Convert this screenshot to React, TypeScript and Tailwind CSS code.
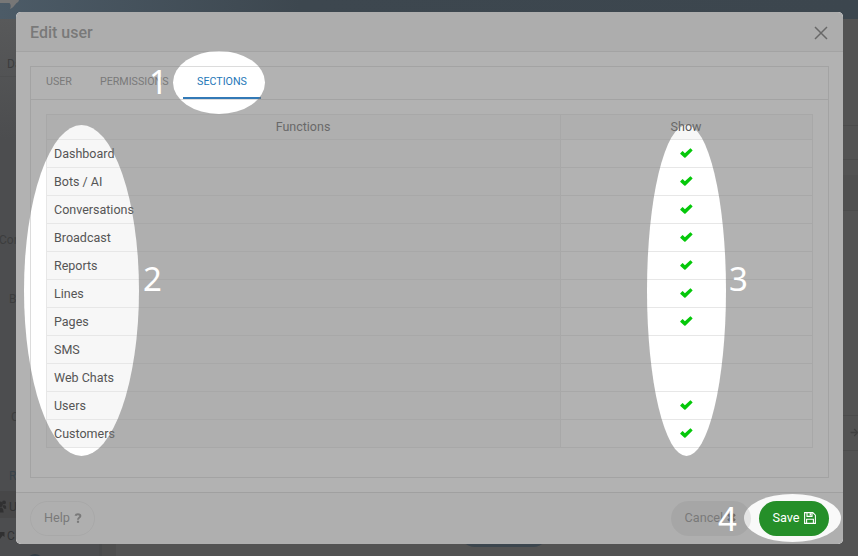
import { FaArrowRight } from "react-icons/fa";
import type { ReactNode } from "react";

const rows: [string, boolean][] = [
  ["Dashboard", true],
  ["Bots / AI", true],
  ["Conversations", true],
  ["Broadcast", true],
  ["Reports", true],
  ["Lines", true],
  ["Pages", true],
  ["SMS", false],
  ["Web Chats", false],
  ["Users", true],
  ["Customers", true],
];

function Check() {
  return (
    <svg viewBox="0 0 13 10" className="mb-[2px] h-[10px] w-[13px]">
      <path
        d="M0.3 5.3 L2.3 3.2 Q2.6 3 2.9 3.3 L4.9 5.3 L10.1 0.4 Q10.4 0.1 10.8 0.4 L12.5 2.2 Q12.7 2.5 12.4 2.8 L5.3 9.7 Q4.9 10 4.5 9.7 L0.4 5.9 Q0.1 5.6 0.3 5.3 Z"
        fill="#05c80a"
      />
    </svg>
  );
}

function QuestionIcon() {
  return (
    <svg viewBox="0 0 8 11" className="h-[10px] w-[8px]">
      <path d="M1.2 3.1C1.5 1.9 2.5 1.3 3.9 1.3C5.5 1.3 6.6 2.1 6.6 3.3C6.6 5 4 5 4 7.3" fill="none" stroke="currentColor" strokeWidth="2.2" />
      <rect x="2.8" y="8.5" width="2.4" height="2.3" fill="currentColor" />
    </svg>
  );
}

function CloseIcon() {
  return (
    <svg viewBox="0 0 9 9" className="ml-[4px] size-[9px] text-[#5a5a5a]">
      <path d="M1.2 1.2L7.8 7.8M7.8 1.2L1.2 7.8" stroke="currentColor" strokeWidth="2.8" />
    </svg>
  );
}

function SaveIcon() {
  return (
    <svg viewBox="0 0 12 12" className="size-[12px]" fill="none" stroke="currentColor" strokeWidth="1.1">
      <path d="M0.6 0.6H8.8L11.4 3.2V11.4H0.6Z" />
      <path d="M3 0.6V4.4H8V0.6" />
      <path d="M6.4 1.2V3.6" strokeWidth="1.5" />
      <path d="M2.6 11.4V7.2H9.4V11.4" />
    </svg>
  );
}

function UsersIcon() {
  return (
    <svg viewBox="0 0 7 14" className="absolute left-0 top-[481px] h-[14px] w-[7px]" fill="#303031">
      <circle cx="0" cy="4.2" r="2.8" />
      <circle cx="4" cy="2.4" r="1.9" />
      <path d="M0 7.6H1.5Q3.6 8.5 3.6 12.5H0Z" />
      <path d="M3 5.2H5.3Q6.3 6 6.2 8.8H4.3Q3.8 7.4 2.6 7Z" />
    </svg>
  );
}

function Backdrop() {
  return (
    <div className="absolute inset-0 flex flex-col bg-[#535353]">
      <div className="flex h-[19px] shrink-0 bg-linear-to-r from-[#4c5b67] via-[#3d474f] via-35% to-[#3c464e]">
        <svg viewBox="0 0 24 12" className="h-3 w-6">
          <path d="M0 0H19C18.8 1.4 18 2.6 16.5 3C14.5 5.5 13 7.8 10 9C11 7 11 4.5 9.5 3H0Z" fill="#777777" />
        </svg>
      </div>
      <div className="flex grow">
        <div className="relative w-[99px] bg-[#4c4d4f] text-[12px] text-[#3c3d3e]">
          <div className="absolute inset-x-0 top-0 h-[120px] bg-linear-to-b from-[#58595a] to-[#4c4d4f]" />
          <div className="absolute left-0 top-[57px] h-px w-full bg-[#4e4f50]" />
          <span className="absolute left-[7px] top-[36px]">Da</span>
          <span className="absolute left-[-1px] top-[212px]">Con</span>
          <span className="absolute left-[9px] top-[271px]">B</span>
          <span className="absolute left-[11px] top-[389px]">C</span>
          <span className="absolute left-[9px] top-[448px] text-[#37424a]">R</span>
          <div className="absolute left-0 top-[472px] h-[27px] w-full bg-[#474748]" />
          <UsersIcon />
          <span className="absolute left-[9px] top-[479px] text-[#313233]">U</span>
          <svg viewBox="0 0 5 8" className="absolute left-0 top-[513px] h-[8px] w-[5px]">
            <path d="M0 0H4.5V5L2.6 3.6L0 7Z" fill="#303031" />
          </svg>
          <span className="absolute left-[7px] top-[508px] text-[#313233]">C</span>
          <div className="absolute left-[27px] top-[535px] size-4 rounded-full bg-[#343e46]" />
        </div>
        <div className="w-[3px] bg-[#494a4b]" />
        <div className="w-[14px] bg-[#4e4e4e]" />
        <div className="relative grow">
          <div className="absolute left-[343px] top-[496px] h-[32px] w-[90px] rounded-full bg-[#3c464e]" />
          <div className="absolute right-0 top-[106px] h-[35px] w-4 border-y border-[#4c4c4c]" />
          <div className="absolute right-0 top-[156px] h-[36px] w-4 border-b border-[#4c4c4c] bg-[#505050]" />
          <div className="absolute right-0 top-[396px] h-[36px] w-4 border-y border-[#4c4c4c]" />
          <FaArrowRight className="absolute right-[-1px] top-[409px] text-[#414141]" size={9} />
        </div>
      </div>
    </div>
  );
}

function Tab({ children }: { children: ReactNode }) {
  return <div className="pt-[8px] text-[10.7px] leading-[14px] text-[#7c7c7c]">{children}</div>;
}

function Spotlight() {
  return (
    <>
      <svg className="absolute inset-0" width="858" height="556" viewBox="0 0 858 556">
        <mask id="holes">
          <rect width="858" height="556" fill="white" />
          <ellipse cx="219" cy="82.5" rx="46" ry="31.5" fill="black" />
          <ellipse cx="81.5" cy="290.5" rx="57.5" ry="165.5" fill="black" />
          <ellipse cx="686.5" cy="290.5" rx="39.5" ry="165.5" fill="black" />
          <ellipse cx="792.5" cy="518" rx="48.5" ry="24" fill="black" />
        </mask>
        <rect x="16" y="12" width="827" height="532" rx="5" fill="#777777" fillOpacity="0.57" mask="url(#holes)" />
      </svg>
      <div className="absolute inset-0 font-['Noto_Sans'] text-[33px] leading-[34px] text-white">
        <span className="absolute left-[149px] top-[65px]">1</span>
        <span className="absolute left-[143px] top-[262px]">2</span>
        <span className="absolute left-[729px] top-[262px]">3</span>
        <span className="absolute left-[718px] top-[502px]">4</span>
      </div>
    </>
  );
}

export default function App() {
  return (
    <div className="relative h-[556px] w-[858px] overflow-hidden font-['Roboto',sans-serif]">
      <Backdrop />
      <div className="relative pl-4 pt-3">
        <div className="flex h-[532px] w-[827px] flex-col overflow-hidden rounded-[5px] bg-white text-[#555]">
          <div className="flex h-[40px] shrink-0 items-center justify-between border-b border-[#dcdcdc] bg-[#f4f4f4] px-[14px]">
            <h1 className="pt-[2px] text-[16px] font-medium text-[#7c7c7c]">Edit user</h1>
            <svg viewBox="0 0 14 14" className="mr-[1px] mt-[3px] size-[14px] text-[#555]">
              <path d="M1 1L13 13M13 1L1 13" stroke="currentColor" strokeWidth="1.5" />
            </svg>
          </div>
          <div className="flex grow flex-col px-[14px] pb-[14px] pt-[14px]">
            <div className="grow border border-[#dcdcdc]">
              <div className="flex h-[33px] border-b border-[#dcdcdc] pl-[15px]">
                <Tab>USER</Tab>
                <div className="ml-[28px]"><Tab>PERMISSIONS</Tab></div>
                <div className="ml-[14.5px] h-[32px] w-[78px] border-b-2 border-[#337ab7] pt-[8px] text-center text-[10.7px] leading-[14px] text-[#2578b8]">
                  SECTIONS
                </div>
              </div>
              <table className="ml-[15px] mt-[14px] w-[767px] table-fixed border-collapse text-[12.5px] leading-[18px]">
                <colgroup>
                  <col className="w-[514px]" />
                  <col />
                </colgroup>
                <thead>
                  <tr className="h-[25px] bg-[#f7f7f7]">
                    <th className="border border-[#e7e7e7] p-0 pr-[1px] font-normal">Functions</th>
                    <th className="border border-[#e7e7e7] p-0 pr-[1px] font-normal">Show</th>
                  </tr>
                </thead>
                <tbody>
                  {rows.map(([name, on]) => (
                    <tr key={name} className="h-[28px]">
                      <td className="border border-[#e7e7e7] bg-[#f7f7f7] p-0 pl-[7px]">{name}</td>
                      <td className="border border-[#e7e7e7] p-0">
                        <div className="flex justify-center">{on && <Check />}</div>
                      </td>
                    </tr>
                  ))}
                </tbody>
              </table>
            </div>
          </div>
          <div className="flex h-[52px] shrink-0 items-center justify-between border-t border-[#d5d5d5] bg-[#f9f9f9] px-[14px] text-[12.7px]">
            <div className="flex h-[35px] w-[65px] items-center justify-center gap-[4px] rounded-full border border-[#e7e7e7] pb-[2px] pl-[1px] text-[#7c7c7c]">
              Help <QuestionIcon />
            </div>
            <div className="flex gap-[8px]">
              <div className="flex h-[35px] w-[80px] items-center rounded-full bg-[#e4e4e4] pb-[2px] pl-[13.5px] text-[#7c7c7c]">
                Cancel <CloseIcon />
              </div>
              <div className="flex h-[35px] w-[70px] items-center justify-center gap-[4px] rounded-full bg-[#258f29] pb-[2px] text-white">
                Save <SaveIcon />
              </div>
            </div>
          </div>
        </div>
      </div>
      <Spotlight />
    </div>
  );
}
